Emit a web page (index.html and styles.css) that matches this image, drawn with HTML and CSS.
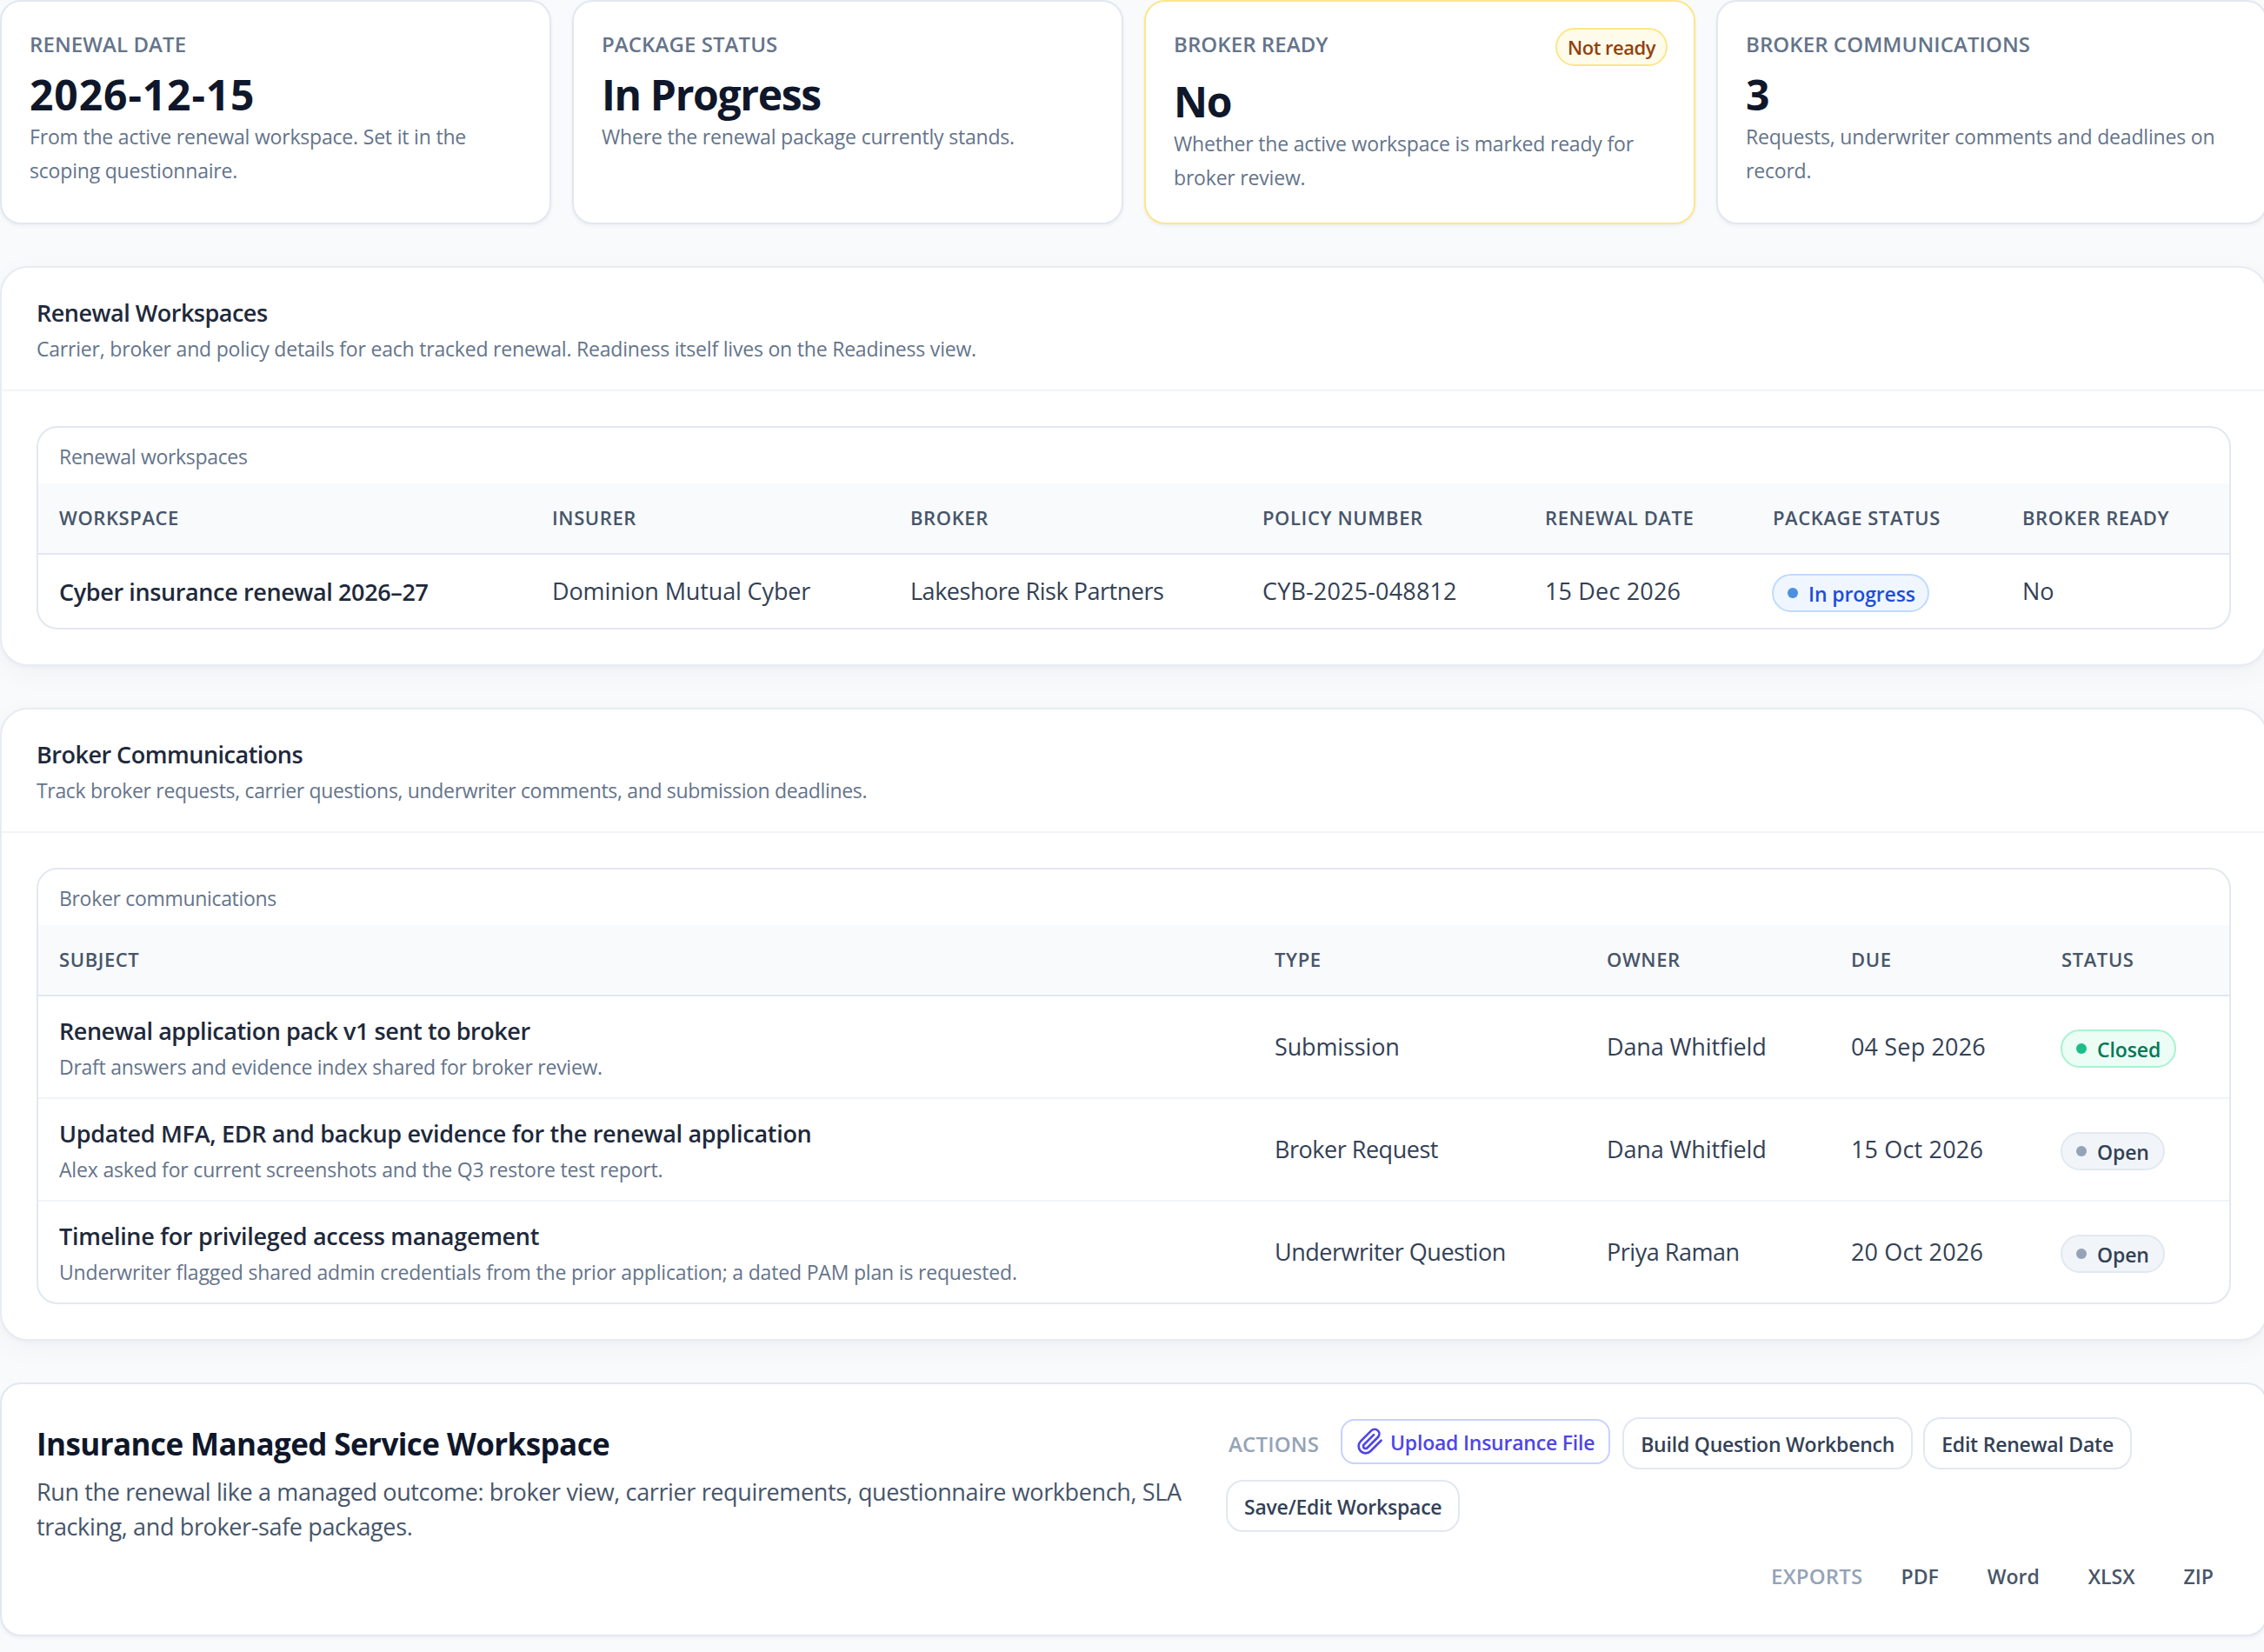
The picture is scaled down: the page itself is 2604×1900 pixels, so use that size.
FILE: index.html
```
<!DOCTYPE html>
<html lang="en">
<head>
  <meta charset="UTF-8">
  <title>Insurance Renewal</title>
  <link rel="stylesheet" href="styles.css">
</head>
<body>
  <main class="page">

    <section class="stats">
      <article class="stat">
        <div class="stat-head"><span class="stat-label">RENEWAL DATE</span></div>
        <div class="stat-value date">2026-12-15</div>
        <p class="stat-text">From the active renewal workspace. Set it in the scoping questionnaire.</p>
      </article>
      <article class="stat">
        <div class="stat-head"><span class="stat-label">PACKAGE STATUS</span></div>
        <div class="stat-value">In Progress</div>
        <p class="stat-text">Where the renewal package currently stands.</p>
      </article>
      <article class="stat warning">
        <div class="stat-head"><span class="stat-label">BROKER READY</span><span class="badge">Not ready</span></div>
        <div class="stat-value">No</div>
        <p class="stat-text">Whether the active workspace is marked ready for broker review.</p>
      </article>
      <article class="stat">
        <div class="stat-head"><span class="stat-label">BROKER COMMUNICATIONS</span></div>
        <div class="stat-value">3</div>
        <p class="stat-text">Requests, underwriter comments and deadlines on record.</p>
      </article>
    </section>

    <section class="panel">
      <header class="panel-head">
        <h2>Renewal Workspaces</h2>
        <p>Carrier, broker and policy details for each tracked renewal. Readiness itself lives on the Readiness view.</p>
      </header>
      <div class="panel-body">
        <div class="table-wrap">
          <table class="workspaces">
            <caption>Renewal workspaces</caption>
            <colgroup>
              <col class="w-name"><col class="w-insurer"><col class="w-broker"><col class="w-policy"><col class="w-date"><col class="w-status"><col class="w-ready">
            </colgroup>
            <thead>
              <tr>
                <th>WORKSPACE</th>
                <th>INSURER</th>
                <th>BROKER</th>
                <th>POLICY NUMBER</th>
                <th>RENEWAL DATE</th>
                <th>PACKAGE STATUS</th>
                <th>BROKER READY</th>
              </tr>
            </thead>
            <tbody>
              <tr>
                <td class="strong">Cyber insurance renewal 2026–27</td>
                <td>Dominion Mutual Cyber</td>
                <td class="tight">Lakeshore Risk Partners</td>
                <td class="num">CYB-2025-048812</td>
                <td class="num">15 Dec 2026</td>
                <td><div class="pill blue"><i class="dot"></i><span>In progress</span></div></td>
                <td>No</td>
              </tr>
            </tbody>
          </table>
        </div>
      </div>
    </section>

    <section class="panel">
      <header class="panel-head">
        <h2>Broker Communications</h2>
        <p class="tight">Track broker requests, carrier questions, underwriter comments, and submission deadlines.</p>
      </header>
      <div class="panel-body">
        <div class="table-wrap">
          <table class="comms">
            <caption>Broker communications</caption>
            <colgroup>
              <col class="c-subject"><col class="c-type"><col class="c-owner"><col class="c-due"><col class="c-status">
            </colgroup>
            <thead>
              <tr>
                <th>SUBJECT</th>
                <th>TYPE</th>
                <th>OWNER</th>
                <th>DUE</th>
                <th>STATUS</th>
              </tr>
            </thead>
            <tbody>
              <tr>
                <td class="subject">
                  <div class="strong tight">Renewal application pack v1 sent to broker</div>
                  <div class="note tight">Draft answers and evidence index shared for broker review.</div>
                </td>
                <td>Submission</td>
                <td>Dana Whitfield</td>
                <td class="num">04 Sep 2026</td>
                <td><div class="pill green"><i class="dot"></i><span>Closed</span></div></td>
              </tr>
              <tr>
                <td class="subject">
                  <div class="strong">Updated MFA, EDR and backup evidence for the renewal application</div>
                  <div class="note">Alex asked for current screenshots and the Q3 restore test report.</div>
                </td>
                <td class="tight">Broker Request</td>
                <td>Dana Whitfield</td>
                <td class="num">15 Oct 2026</td>
                <td><div class="pill"><i class="dot"></i><span>Open</span></div></td>
              </tr>
              <tr>
                <td class="subject">
                  <div class="strong">Timeline for privileged access management</div>
                  <div class="note">Underwriter flagged shared admin credentials from the prior application; a dated PAM plan is requested.</div>
                </td>
                <td class="tight">Underwriter Question</td>
                <td class="tight">Priya Raman</td>
                <td class="num">20 Oct 2026</td>
                <td><div class="pill"><i class="dot"></i><span>Open</span></div></td>
              </tr>
            </tbody>
          </table>
        </div>
      </div>
    </section>

    <section class="service">
      <div class="service-text">
        <h1>Insurance Managed Service Workspace</h1>
        <p>Run the renewal like a managed outcome: broker view, carrier requirements, questionnaire workbench, SLA tracking, and broker-safe packages.</p>
      </div>
      <div class="service-side">
        <div class="actions">
          <span class="group-label">ACTIONS</span>
          <button class="btn upload">
            <svg width="32" height="32" viewBox="0 0 24 24" fill="none" stroke="currentColor" stroke-width="2" stroke-linecap="round" stroke-linejoin="round"><path d="M21.44 11.05l-9.19 9.19a6 6 0 0 1-8.49-8.49l9.19-9.19a4 4 0 0 1 5.66 5.66l-9.2 9.19a2 2 0 0 1-2.83-2.83l8.49-8.48"/></svg>
            <span>Upload Insurance File</span>
          </button>
          <button class="btn">Build Question Workbench</button>
          <button class="btn">Edit Renewal Date</button>
          <button class="btn">Save/Edit Workspace</button>
        </div>
        <div class="exports">
          <span class="group-label">EXPORTS</span>
          <button class="export">PDF</button>
          <button class="export">Word</button>
          <button class="export">XLSX</button>
          <button class="export">ZIP</button>
        </div>
      </div>
    </section>

  </main>
</body>
</html>
```
FILE: styles.css
```
* {
  box-sizing: border-box;
}

html {
  overflow: hidden;
}

body {
  margin: 0;
  background: #f8fafc;
  color: #334155;
  font-family: "Segoe UI", "Open Sans", sans-serif;
  overflow: hidden;
}

h1, h2, p {
  margin: 0;
}

button {
  font-family: inherit;
}

.page {
  width: 2608px;
  height: 1900px;
  display: flex;
  flex-direction: column;
  gap: 48px;
}

/* stat cards */
.stats {
  display: grid;
  grid-template-columns: repeat(4, 1fr);
  gap: 24px;
}

.stat {
  height: 258px;
  padding: 30px 32px;
  background: #fff;
  border: 2px solid #e2e8f0;
  border-radius: 24px;
  box-shadow: 0 2px 4px rgba(15, 23, 42, 0.05);
}

.stat.warning {
  border-color: #fde68a;
}

.stat-head {
  display: flex;
  justify-content: space-between;
  align-items: flex-start;
}

.stat-label {
  font-size: 24px;
  font-weight: 600;
  line-height: 37px;
  letter-spacing: 0.08px;
  color: #64748b;
}

.badge {
  height: 44px;
  margin: 0 -2px 1px 0;
  padding: 1px 12px 0;
  border: 2px solid #fde68a;
  border-radius: 22px;
  background: #fffbeb;
  color: #92400e;
  font-size: 22px;
  font-weight: 600;
  line-height: 38px;
  letter-spacing: -0.5px;
}

.stat-value {
  margin-top: 15px;
  font-size: 48px;
  font-weight: 700;
  line-height: 49px;
  letter-spacing: -1.35px;
  color: #0f172a;
}

.stat-value.date {
  letter-spacing: 0.9px;
}

.stat-text {
  margin-top: 5px;
  font-size: 23px;
  line-height: 39px;
  letter-spacing: -0.19px;
  color: #64748b;
}

/* panels */
.panel {
  background: #fff;
  border: 2px solid #e8ecf2;
  border-radius: 32px;
  box-shadow: 0 2px 4px rgba(15, 23, 42, 0.03), 0 8px 32px rgba(15, 23, 42, 0.04);
}

.panel-head {
  padding: 33px 40px 29px;
  border-bottom: 2px solid #f1f5f9;
}

.panel-head h2 {
  font-size: 27px;
  font-weight: 600;
  line-height: 37px;
  letter-spacing: -0.5px;
  color: #1e293b;
}

.panel-head p {
  margin-top: 5px;
  font-size: 23px;
  line-height: 36px;
  letter-spacing: -0.2px;
  color: #64748b;
}

.panel-head .tight {
  letter-spacing: -0.33px;
}

.panel-body {
  padding: 40px;
}

.table-wrap {
  border: 2px solid #e2e8f0;
  border-radius: 24px;
  overflow: hidden;
}

/* tables */
table {
  width: 2520px;
  table-layout: fixed;
  border-collapse: separate;
  border-spacing: 0;
}

.w-name { width: 567px; }
.w-insurer { width: 412px; }
.w-broker { width: 405px; }
.w-policy { width: 325px; }
.w-date { width: 262px; }
.w-status { width: 287px; }
.w-ready { width: 262px; }

.c-subject { width: 1398px; }
.c-type { width: 382px; }
.c-owner { width: 281px; }
.c-due { width: 242px; }
.c-status { width: 217px; }

caption {
  padding: 17px 24px 15px;
  text-align: left;
  font-size: 23px;
  line-height: 32px;
  letter-spacing: -0.32px;
  color: #64748b;
}

th {
  padding: 24px 24px 26px;
  background: #f8fafc;
  border-bottom: 2px solid #e2e8f0;
  text-align: left;
  font-size: 22px;
  font-weight: 600;
  line-height: 30px;
  letter-spacing: 0.6px;
  color: #475569;
  white-space: nowrap;
}

td {
  height: 84px;
  padding: 0 24px;
  vertical-align: middle;
  font-size: 27px;
  line-height: 38px;
  letter-spacing: -0.13px;
  white-space: nowrap;
}

td.tight {
  letter-spacing: -0.48px;
}

td.num {
  letter-spacing: 0.16px;
}

.comms td {
  height: 118px;
  border-bottom: 2px solid #f1f5f9;
}

.comms tr:last-child td {
  height: 116px;
  border-bottom: 0;
}

.comms .subject {
  padding-top: 2px;
}

.strong {
  font-weight: 600;
  line-height: 37px;
  letter-spacing: -0.3px;
  color: #1e293b;
}

td.strong {
  letter-spacing: -0.38px;
}

.strong.tight {
  letter-spacing: -0.45px;
}

.note {
  margin-top: 7px;
  font-size: 23px;
  line-height: 32px;
  letter-spacing: -0.18px;
  color: #64748b;
}

.note.tight {
  letter-spacing: -0.26px;
}

.pill {
  display: flex;
  align-items: center;
  gap: 12px;
  width: fit-content;
  height: 44px;
  margin: 4px 0 0 -1px;
  padding: 0 16px;
  border: 2px solid #e2e8f0;
  border-radius: 22px;
  background: #f1f5f9;
  color: #334155;
  font-size: 23px;
  font-weight: 600;
  line-height: 32px;
  letter-spacing: -0.12px;
}

.pill span {
  padding-top: 2px;
}

.dot {
  width: 12px;
  height: 12px;
  border-radius: 50%;
  background: #94a3b8;
}

.pill.blue {
  padding-right: 14px;
  background: #eff6ff;
  border-color: #bfdbfe;
  color: #1d4ed8;
}

.blue .dot {
  background: #4a90e2;
}

.pill.green {
  background: #ecfdf5;
  border-color: #a7f3d0;
  color: #047857;
}

.green .dot {
  background: #1bbd88;
}

/* managed service */
.service {
  display: flex;
  gap: 48px;
  height: 292px;
  padding: 38px 40px;
  background: #fff;
  border: 2px solid #e2e8f0;
  border-radius: 24px;
  box-shadow: 0 2px 4px rgba(15, 23, 42, 0.05);
}

.service-text {
  width: 1320px;
  padding-top: 7px;
}

.service-text h1 {
  font-size: 35px;
  font-weight: 700;
  line-height: 48px;
  letter-spacing: -0.58px;
  color: #0f172a;
}

.service-text p {
  margin-top: 11px;
  font-size: 27px;
  line-height: 40px;
  letter-spacing: -0.37px;
  color: #475569;
}

.service-side {
  flex: 1;
  display: flex;
  flex-direction: column;
  gap: 20px;
}

.actions {
  display: flex;
  flex-wrap: wrap;
  align-items: flex-start;
  gap: 12px;
}

.group-label {
  height: 60px;
  padding-top: 1px;
  font-size: 24px;
  font-weight: 600;
  line-height: 60px;
  letter-spacing: 0.2px;
  color: #94a3b8;
}

.actions .group-label {
  width: 120px;
  padding-left: 3px;
}

.btn {
  height: 60px;
  padding: 1px 19px 0;
  background: #fff;
  border: 2px solid #e2e8f0;
  border-radius: 20px;
  color: #334155;
  font-size: 23px;
  font-weight: 600;
  line-height: 32px;
  letter-spacing: -0.22px;
}

.btn.upload {
  display: flex;
  align-items: center;
  gap: 7px;
  height: 52px;
  margin: 2px 2px 0 0;
  padding: 0 16px;
  border-color: #c7d2fe;
  border-radius: 16px;
  color: #4f46e5;
}

.upload span {
  padding-top: 2px;
}

.exports {
  display: flex;
  justify-content: flex-end;
  align-items: center;
  gap: 18px;
  padding-right: 1px;
}

.exports .group-label {
  margin-right: 7px;
}

.export {
  height: 60px;
  padding: 1px 19px 0;
  background: none;
  border: 0;
  color: #475569;
  font-size: 23px;
  font-weight: 600;
}
```
